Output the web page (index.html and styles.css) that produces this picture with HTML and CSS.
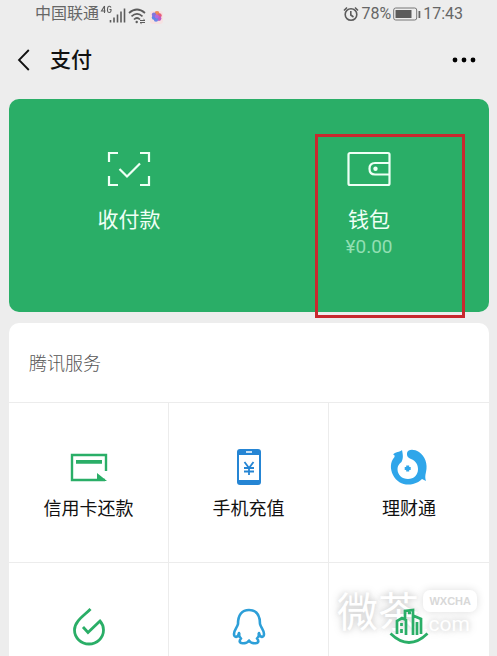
FILE: index.html
```html
<!DOCTYPE html>
<html lang="zh-CN">
<head>
<meta charset="utf-8">
<meta name="viewport" content="width=device-width, initial-scale=1">
<title>支付</title>
<link rel="stylesheet" href="styles.css">
</head>
<body>
<div class="page">
  <div class="status">
    <div class="status-group">
      <span>中国联通</span>
      <svg width="60" height="20" viewBox="1 0 60 20" fill="none" stroke="#5c5c5c">
        <path d="M4.500 2 1.500 7h4M4.500 2v7M11 3.500Q10.500 2 9 2.300T7.500 5v2q.3 1.500 1.800 1.500T11 7V5.500H9.500" stroke-width="1.100"/>
        <path d="M10.500 16v2.500M14 13.500v5M17.500 10.500v8M21 7.500v11M24.500 4.500v14" stroke-width="1.600"/>
        <path d="M29 9q8-7 16 0M31.500 12.300q5.500-5 11 0M34 15.500q3-3 6 0" stroke-width="1.700"/>
        <circle cx="36.700" cy="18" r="1.200" fill="#5c5c5c" stroke="none"/>
        <path d="M40 16.500h5l-1.500-1.300M45 18.500h-5l1.500 1.200" stroke-width="1"/>
        <rect x="50" y="7" width="13" height="13" rx="3" fill="#f6e2e2" stroke="none"/>
        <g stroke="none"><circle cx="57" cy="9.500" r="2.400" fill="#ee8b58"/><circle cx="59.500" cy="11.500" r="2.200" fill="#e85f7b"/><circle cx="59" cy="14.500" r="2.400" fill="#c05bc5"/><circle cx="56" cy="15.500" r="2.200" fill="#6b87e6"/><circle cx="54" cy="13.500" r="2.200" fill="#5f87e6"/><circle cx="54" cy="10.800" r="2.200" fill="#8476db"/><circle cx="56.800" cy="12.500" r="2" fill="#b56ade"/></g>
      </svg>
    </div>
    <div class="status-group">
      <svg width="16" height="18" viewBox="0 0 16 18" fill="none" stroke="#5c5c5c" stroke-width="1.600"><circle cx="8" cy="9.500" r="5.800"/><path d="M7.800 6v4l2.700 2M1 5.500 4 2.500M12 2.500l3 3"/></svg>
      <span>78%</span>
      <svg width="28" height="14" viewBox="0 0 28 14"><rect x=".7" y="1" width="23" height="12" rx="2" fill="none" stroke="#777"/><path d="M2.500 3h16v8h-16z" fill="#5c5c5c"/><path d="M25.500 4h1.800v7h-1.800z" fill="#666"/></svg>
      <span>17:43</span>
    </div>
  </div>

  <header class="nav">
    <button class="plain" aria-label="返回"><svg width="14" height="22" viewBox="0 0 14 22" fill="none" stroke="#111" stroke-width="1.800"><path d="M11.800 1 2 11l9.800 10"/></svg></button>
    <h1>支付</h1>
    <button class="plain more" aria-label="更多"><svg width="24" height="6" viewBox="0 0 24 6"><circle cx="3" cy="3" r="2.400"/><circle cx="12" cy="3" r="2.400"/><circle cx="21" cy="3" r="2.400"/></svg></button>
  </header>

  <section class="hero">
    <button class="hero-item">
      <svg width="44" height="36" viewBox="0 0 44 36" fill="none" stroke="#effff5" stroke-width="2.200"><path d="M2 11V2h9M33 2h9v9M42 25v9h-9M11 34H2v-9"/><path d="m12.500 18 7.500 7.500L33 12.500"/></svg>
      <span>收付款</span>
    </button>
    <button class="hero-item">
      <svg width="44" height="36" viewBox="0 0 44 36" fill="none" stroke="#effff5" stroke-width="2.200"><rect x="1.500" y="2" width="41" height="32" rx="1.500"/><path d="M42.500 12H28q-5.500 0-5.500 5.700T28 23.500h14.500"/><circle cx="28.500" cy="17.700" r="2.200" fill="#effff5" stroke="none"/></svg>
      <span>钱包</span>
      <span class="balance">¥0.00</span>
      <span class="marker"></span>
    </button>
  </section>

  <section class="services">
    <h2>腾讯服务</h2>
    <div class="grid">
      <a class="cell" href="#card">
        <svg width="40" height="36" viewBox="0 0 40 36"><path d="M37 22V6H3v25h33" fill="none" stroke="#2aae67" stroke-width="2.400"/><path d="M7 11h26v3.800H7zM28 24l10 8H28z" fill="#2aae67"/></svg>
        <span>信用卡还款</span>
      </a>
      <a class="cell" href="#phone">
        <svg width="40" height="36" viewBox="0 0 40 36"><rect x="8" y="0" width="24" height="36" rx="3" fill="#2585d4"/><path d="M10 6h20v25H10z" fill="#fff"/><path d="M17 3h6" stroke="#fff" stroke-width="1.500"/><path d="m15.500 13 4.500 6 4.500-6M15 19h10M15 22.500h10M20 19v7" stroke="#2585d4" stroke-width="1.800" fill="none"/></svg>
        <span>手机充值</span>
      </a>
      <a class="cell" href="#wealth">
        <svg width="40" height="36" viewBox="0 0 40 36"><path d="M13 1C11 3 6 3 4 5.500q2 0 1.500 2.500C1 13 1 20 4 26c4 8 12 11 20 9 4-1 7-3 9-5l4 2c-1-3-1-5 0-9 2-8-1-16-7-20-5-3-11-3-12 1-.500 3 1 5 4 6 5 2 7 6 7 10 0 6-4 10-10 10S8.500 26 8.500 20q0-4 4-7c2-4 1.500-7 .5-12z" fill="#2fa6ea"/><path d="M17.200 16.500h3v1.500h1.500v3h-1.500v1.500h-3V21h-1.500v-3h1.500z" fill="#2fa6ea"/></svg>
        <span>理财通</span>
      </a>
      <a class="cell" href="#life" aria-label="生活缴费">
        <svg width="40" height="36" viewBox="0 0 40 36" fill="none" stroke="#2aae67" stroke-width="2.800"><path d="M21.500 0C16 6 5.500 12 5.500 21a14.500 14 0 0 0 29 0q0-5-3.500-9L19 23.500 14 18"/></svg>
      </a>
      <a class="cell" href="#qq" aria-label="Q币充值">
        <svg width="40" height="36" viewBox="0 0 40 36" fill="none" stroke="#2d9fd8" stroke-width="2.600" stroke-linejoin="round"><path d="M11 26c-1-1-1-2-1-2-1 5-5 5-5 1s3-6 4-10C9 6 13 1 20 1s11 5 11 14c1 4 4 6 4 10s-4 4-5-1c0 0 0 1-1 2M10 25q0 3 2 4.500c-5 6 6 6 8 2 2 4 13 4 8-2q2-1.500 2-4.500"/></svg>
      </a>
      <a class="cell" href="#city" aria-label="城市服务">
        <svg width="40" height="36" viewBox="0 0 40 36" fill="none" stroke="#2aae67" stroke-width="2.700"><path d="M1.500 24.500q18.500 18 37 0"/><path d="M8 25V12l5-3 4 2v15M12.500 14v3M12.500 20v4M16 10V2l8-1v25M19 4h3M25 7l7 3v15M28 13v13"/></svg>
      </a>
    </div>
  </section>
  <div class="watermark"><span class="mark-name">微茶</span><span class="mark-side"><span class="mark-bubble">WXCHA</span><span class="mark-com">.com</span></span></div>
</div>
</body>
</html>
```
FILE: styles.css
```css
* { box-sizing: border-box; }

body {
  margin: 0;
  background: #ededed;
  font-family: Roboto, "Noto Sans CJK SC", sans-serif;
  color: #111;
}

.page {
  position: relative;
  display: flex;
  flex-direction: column;
  height: 100vh;
  padding: 0 8px 0 9px;
  overflow: hidden;
}

svg { display: block; flex: none; overflow: visible; }

button {
  padding: 0;
  border: 0;
  background: none;
  font: inherit;
  color: inherit;
}

.status {
  flex: none;
  display: flex;
  justify-content: space-between;
  height: 27px;
  padding: 0 26px;
  font-size: 16px;
  line-height: 27px;
  color: #666;
}

.status-group { display: flex; align-items: center; gap: 2px; }

.nav {
  flex: none;
  display: flex;
  align-items: center;
  height: 66px;
  margin-bottom: 6px;
  padding: 0 13px 0 8px;
}

.nav h1 {
  margin: 0 0 0 19px;
  font-size: 21px;
  font-weight: 500;
  line-height: 28px;
}

.more { margin-left: auto; }

.hero {
  flex: none;
  display: grid;
  grid-template-columns: 1fr 1fr;
  height: 213px;
  border-radius: 10px;
  background: #2aae67;
  color: #effff5;
}

.hero-item {
  position: relative;
  display: flex;
  flex-direction: column;
  align-items: center;
  padding-top: 52px;
  font-size: 21px;
  line-height: 28px;
}

.hero-item svg { margin-bottom: 19px; }
.balance { font-size: 19px; line-height: 26px; color: #92dfb3; }

.marker {
  position: absolute;
  top: 35px;
  left: 66px;
  width: 150px;
  height: 184px;
  border: 3px solid #c8282e;
}

.services {
  flex: 1;
  min-height: 0;
  margin-top: 11px;
  border-radius: 10px 10px 0 0;
  background: #fff;
  overflow: hidden;
}

.services h2 {
  margin: 0;
  padding: 2px 0 0 20px;
  font-size: 18px;
  font-weight: 300;
  line-height: 77px;
  color: #555;
}

.grid { display: grid; grid-template-columns: repeat(3, 1fr); }

.cell {
  display: flex;
  flex-direction: column;
  align-items: center;
  gap: 12px;
  height: 160px;
  padding-top: 46px;
  border-top: 1px solid #ececec;
  border-right: 1px solid #ececec;
  font-size: 18px;
  line-height: 24px;
  color: #111;
  text-decoration: none;
}

.cell:nth-child(3n) { border-right: 0; }

.cell svg { position: relative; z-index: 2; }

.watermark {
  position: absolute;
  z-index: 1;
  right: 20px;
  bottom: 20px;
  display: flex;
  align-items: flex-end;
  gap: 4px;
  color: #fff;
  text-shadow: 0 0 10px #ccc, 0 0 5px #ddd;
  pointer-events: none;
}

.mark-name { font-size: 41px; line-height: 46px; }
.mark-side { display: flex; flex-direction: column; align-items: flex-end; }

.mark-bubble {
  padding: 0 6px;
  border-radius: 7px;
  background: #fff;
  box-shadow: 0 0 8px #ddd;
  font-family: "Liberation Sans", sans-serif;
  font-size: 11px;
  font-weight: 700;
  line-height: 22px;
  color: #d8d8d8;
  text-shadow: none;
}

.mark-com { padding-right: 7px; font-size: 21px; line-height: 24px; }
```
